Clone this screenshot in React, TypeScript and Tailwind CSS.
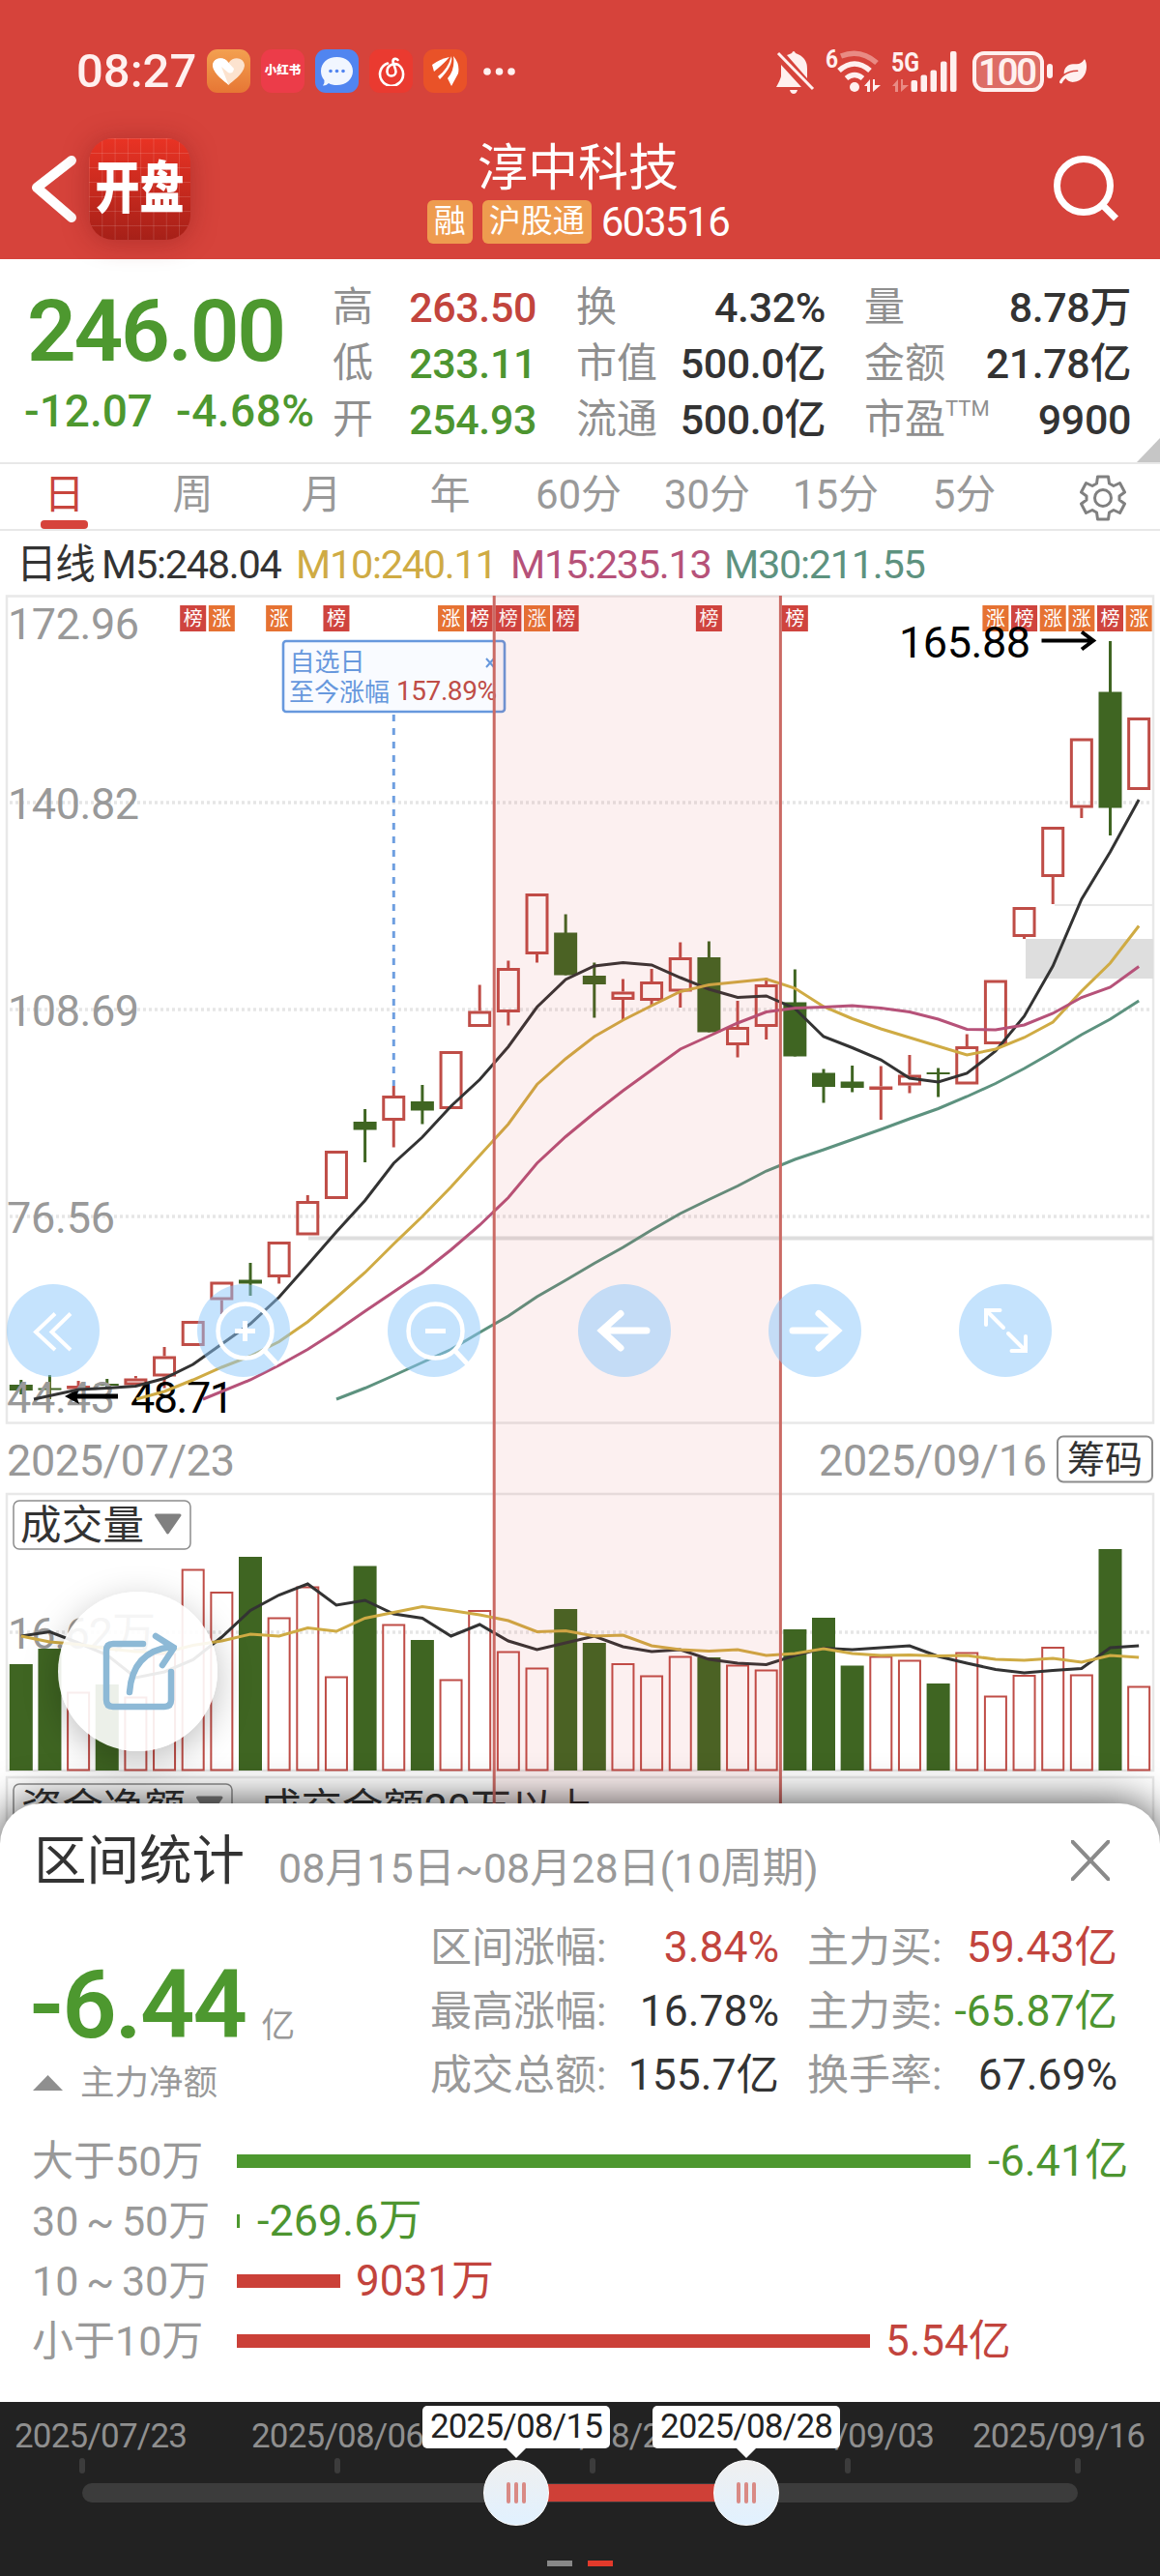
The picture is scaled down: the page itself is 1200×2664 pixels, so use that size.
import { FaLeaf } from "react-icons/fa";

const RED = "#bf4d47";
const GREEN = "#3f6522";

// [up, high, top, bottom, low, volumeTop]
const candles: [number, number, number, number, number, number][] = [
  [0, 1427, 1432, 1438, 1442, 1721],
  [0, 1422, 1435.5, 1437.5, 1447, 1705],
  [1, 1428, 1433, 1435, 1438, 1750],
  [0, 1426, 1431, 1433, 1437, 1742],
  [1, 1423, 1425.5, 1432.5, 1434, 1755],
  [1, 1393, 1402.5, 1423.5, 1435.5, 1710],
  [1, 1366, 1366, 1392, 1392, 1623],
  [1, 1325.5, 1325.5, 1344.5, 1359, 1646.5],
  [0, 1306, 1323.5, 1327.5, 1340, 1610],
  [1, 1284, 1284, 1321, 1327.5, 1673],
  [1, 1236, 1242, 1277.5, 1277.5, 1641],
  [1, 1190, 1190, 1240, 1240, 1734],
  [0, 1147, 1160, 1168.5, 1202, 1619.5],
  [1, 1123, 1133, 1159, 1186.5, 1680],
  [0, 1122, 1139, 1148.5, 1162.5, 1696],
  [1, 1087, 1087, 1147, 1147, 1737],
  [1, 1018.5, 1045.5, 1062, 1062, 1665.5],
  [1, 993.5, 1001, 1047, 1060.5, 1708],
  [1, 924, 924, 987, 995.5, 1725],
  [0, 945.5, 964.5, 1008.5, 1008.5, 1664],
  [0, 995.5, 1009, 1018, 1052.5, 1699],
  [1, 1012.5, 1025.5, 1034, 1055, 1720.5],
  [1, 1002, 1015, 1035, 1040, 1733],
  [1, 974.5, 990, 1025.5, 1042, 1713],
  [0, 973.5, 990, 1067.5, 1067.5, 1714],
  [1, 1035, 1062, 1081, 1093.5, 1722],
  [1, 1011.5, 1018, 1062, 1075, 1727],
  [0, 1002.5, 1036.5, 1092.5, 1092.5, 1685],
  [0, 1105.5, 1109.5, 1124, 1140.5, 1673],
  [0, 1102, 1118.5, 1125, 1129.5, 1722.5],
  [1, 1102.5, 1123.5, 1125, 1158, 1713],
  [1, 1091, 1111.5, 1122.5, 1130.5, 1717],
  [0, 1104.5, 1109, 1111, 1134.5, 1741],
  [1, 1069.5, 1082, 1121.5, 1121.5, 1709],
  [1, 1013.5, 1013.5, 1080, 1080, 1754],
  [1, 938, 938, 969, 971, 1732.5],
  [1, 855, 855, 907, 935, 1703.5],
  [1, 763.5, 763.5, 835.5, 846, 1732],
  [0, 663, 715.5, 835.5, 864, 1602],
  [1, 742, 742, 817, 817, 1744],
];

const cx = (i: number) => 21.8 + 29.65 * i;

// moving averages: x of the first visible point, index of the next one, y values
const priceLines = [
  {
    color: "#333333",
    x0: 35,
    from: 2,
    ys: [1437, 1435.5, 1433.5, 1425.5, 1411, 1390, 1369, 1341.5, 1308, 1274, 1241.5, 1203, 1176, 1144, 1116.5, 1082.5, 1041.5, 1013, 999, 995.5, 998, 1011, 1023, 1031.5, 1030, 1043, 1072, 1083.5, 1096, 1115, 1119, 1110, 1087, 1051, 999, 930, 881, 827],
  },
  {
    color: "#cfab44",
    x0: 141,
    from: 5,
    ys: [1439, 1427, 1414, 1402.5, 1387.5, 1367, 1342, 1316, 1286.5, 1258, 1227.5, 1195, 1162.5, 1121.5, 1095, 1072, 1055, 1040, 1025.5, 1018.5, 1015.5, 1012.5, 1022, 1041, 1053.5, 1064, 1073, 1082, 1091, 1085, 1073, 1057, 1025, 996, 957.5],
  },
  {
    color: "#b65279",
    x0: 210,
    from: 8,
    ys: [1427, 1412, 1395.5, 1376.5, 1356, 1336, 1316, 1292.5, 1267, 1238.5, 1203, 1175.5, 1151, 1128, 1106.5, 1085, 1071.5, 1058, 1046.5, 1042.5, 1041.5, 1040, 1042.5, 1046.5, 1054, 1064.5, 1065, 1060, 1048, 1031.5, 1021, 999.5],
  },
  {
    color: "#5d927f",
    x0: 348,
    from: 12,
    ys: [1435.5, 1422.5, 1409, 1395.5, 1378, 1361, 1341, 1324, 1306.5, 1290, 1272, 1255, 1240.5, 1226.5, 1211, 1199, 1189, 1178.5, 1168, 1157, 1146.5, 1134, 1120.5, 1105, 1088, 1070, 1054, 1035],
  },
];

const volumeLines = [
  {
    color: "#333333",
    ys: [1692, 1687.5, 1699, 1711.5, 1735, 1729, 1716.5, 1693, 1665.5, 1649.5, 1638, 1660, 1655, 1669, 1673.5, 1692, 1680, 1697, 1706, 1699, 1692, 1703, 1708, 1706, 1716, 1720, 1721.5, 1712, 1704.5, 1706, 1704, 1702, 1713, 1720, 1726.5, 1730, 1727.5, 1725.5, 1704, 1702],
  },
  {
    color: "#cfab44",
    ys: [1692, 1698, 1700.5, 1705, 1708, 1709, 1701.5, 1697, 1690, 1692, 1683.5, 1687, 1673.5, 1667.5, 1661.5, 1665.5, 1670, 1676, 1687.5, 1686.5, 1692, 1691, 1702, 1706, 1707.5, 1706, 1712, 1710, 1705, 1710, 1712, 1711.5, 1712.5, 1712, 1716, 1717, 1715, 1719, 1712, 1714],
  },
];

const flags: [number, string][] = [
  [6, "榜"],
  [7, "涨"],
  [9, "涨"],
  [11, "榜"],
  [15, "涨"],
  [16, "榜"],
  [17, "榜"],
  [18, "涨"],
  [19, "榜"],
  [24, "榜"],
  [27, "榜"],
  [34, "涨"],
  [35, "榜"],
  [36, "涨"],
  [37, "涨"],
  [38, "榜"],
  [39, "涨"],
];

const tabs = ["日", "周", "月", "年", "60分", "30分", "15分", "5分"];

const legend = [
  { label: "日线", className: "w-[88px] text-[#333]" },
  { label: "M5:248.04", className: "w-[201px] text-[#333]" },
  { label: "M10:240.11", className: "w-[222px] text-[#cfab44]" },
  { label: "M15:235.13", className: "w-[221px] text-[#b65279]" },
  { label: "M30:211.55", className: "text-[#5d927f]" },
];

const quoteColumns = [
  {
    className: "w-[211px]",
    rows: [
      { label: "高", value: "263.50", color: "text-[#c2443d]" },
      { label: "低", value: "233.11", color: "text-[#4d9530]" },
      { label: "开", value: "254.93", color: "text-[#4d9530]" },
    ],
  },
  {
    className: "ml-[41px] w-[258px]",
    rows: [
      { label: "换", value: "4.32%", color: "text-[#333]" },
      { label: "市值", value: "500.0亿", color: "text-[#333]" },
      { label: "流通", value: "500.0亿", color: "text-[#333]" },
    ],
  },
  {
    className: "ml-[40px] w-[276px]",
    rows: [
      { label: "量", value: "8.78万", color: "text-[#333]" },
      { label: "金额", value: "21.78亿", color: "text-[#333]" },
      { label: "市盈", sup: "TTM", value: "9900", color: "text-[#333]" },
    ],
  },
];

const statColumns = [
  {
    className: "w-[361px]",
    rows: [
      { label: "区间涨幅:", value: "3.84%", color: "text-[#c2443d]" },
      { label: "最高涨幅:", value: "16.78%", color: "text-[#333]" },
      { label: "成交总额:", value: "155.7亿", color: "text-[#333]" },
    ],
  },
  {
    className: "ml-[29px] w-[321px]",
    rows: [
      { label: "主力买:", value: "59.43亿", color: "text-[#c2443d]" },
      { label: "主力卖:", value: "-65.87亿", color: "text-[#4d9530]" },
      { label: "换手率:", value: "67.69%", color: "text-[#333]" },
    ],
  },
];

const flows = [
  { label: "大于50万", width: 759, value: "-6.41亿", up: false },
  { label: "30 ~ 50万", width: 3, value: "-269.6万", up: false },
  { label: "10 ~ 30万", width: 107, value: "9031万", up: true },
  { label: "小于10万", width: 655, value: "5.54亿", up: true },
];

const sliderDates = [
  { label: "2025/07/23", className: "ml-[15px]" },
  { label: "2025/08/06", className: "ml-[67px]" },
  { label: "2025/08/20", className: "ml-[86px]" },
  { label: "2025/09/03", className: "ml-[86px]" },
  { label: "2025/09/16", className: "ml-[40px]" },
];

const StatusBar = () => (
  <div className="flex h-[45px] items-center pl-[79px] text-[#fff0ef]">
    <span className="w-[135px] text-[49px] leading-[45px] font-medium">08:27</span>
    <div className="flex gap-[11px]">
      <div className="flex size-[45px] items-center justify-center rounded-[11px] bg-linear-to-b from-[#f3a050] to-[#e67634]">
        <svg width="35" height="30" viewBox="0 0 35 30">
          <path d="M17.5 29 C14 25 2 18 1 9 C1 1 12 -2 17.5 6 C23 -2 34 1 34 9 C33 18 21 25 17.5 29Z" fill="#fce3cf" />
          <path d="M17.5 29 C14 25 2 18 1 9 C1 1 12 -2 17.5 6 L23 12 Q22 18 17 16 L10 10" fill="#fff" />
        </svg>
      </div>
      <div className="flex size-[45px] items-center justify-center rounded-[11px] bg-[#ec3c49] text-[12.5px] leading-none font-black whitespace-nowrap text-white">
        小红书
      </div>
      <div className="flex size-[45px] items-center justify-center rounded-[11px] bg-[#5185f0]">
        <svg width="35" height="32" viewBox="0 0 35 32">
          <path d="M17.5 1 C27 1 34 7 34 15.500 C34 24 27 30 17.500 30 C14 30 11 29.500 9 28 Q6 31 3 30.500 Q5 28 4.500 25 C2 22 1 19 1 15.500 C1 7 8 1 17.500 1Z" fill="#f1f6ff" />
          <g fill="#5185f0">
            <circle cx="11" cy="15.500" r="1.800" />
            <circle cx="17.500" cy="15.500" r="1.800" />
            <circle cx="24" cy="15.500" r="1.800" />
          </g>
        </svg>
      </div>
      <div className="flex size-[45px] items-center justify-center rounded-[11px] bg-[#ea3a30]">
        <svg width="28" height="30" viewBox="0 0 28 30" fill="none" stroke="#fff" strokeWidth="2.600" strokeLinecap="round">
          <path d="M10 6.500 A12 12 0 1 0 21 8 C17 6 9 8 9.500 15.500 C10 21 18.500 21 18.500 15 C18.500 12 15.500 7 15.500 4.500 C15.500 1.500 19 1 20.500 3" />
        </svg>
      </div>
      <div className="flex size-[45px] items-center justify-center rounded-[11px] bg-[#e95228]">
        <svg width="29" height="31" viewBox="0 0 29 31" fill="#fff">
          <path d="M1 9 Q9 3 19 1 Q13 8 3 16Z" />
          <path d="M7 21 Q17 14 21 0 Q23 10 9 24Z" />
          <path d="M23 0 Q30 8 28 18 L21 31 L17 23 Q25 14 23 0Z" />
        </svg>
      </div>
    </div>
    <svg className="ml-[14px]" width="40" height="10" fill="#fff0ef">
      <circle cx="7" cy="5" r="3.800" />
      <circle cx="19.500" cy="5" r="3.800" />
      <circle cx="32" cy="5" r="3.800" />
    </svg>
    <svg className="ml-[264px]" width="290" height="64" viewBox="802 41 290 64" fill="#fff0ef">
      {/* muted bell */}
      <path d="M815 56 Q818 55 820 54 Q822 50 824 54 Q836 58 836 70 L836 80Z" />
      <path d="M809 66 L830 89 H804 Q808 82 809 78Z" />
      <path d="M818 92 H826 Q825 96 822 96 Q819 96 818 92Z" />
      <path d="M806 54 L842 91" stroke="#fff0ef" strokeWidth="3" />
      {/* wifi 6 */}
      <text x="855" y="69" fontSize="25" fontWeight="700" textLength="13" lengthAdjust="spacingAndGlyphs">6</text>
      <g fill="none" strokeWidth="5.500">
        <path d="M871 57 Q891 49 908 64" stroke="#e98b84" />
        <path d="M869 72 Q885 58 901 72" stroke="#fff0ef" />
        <path d="M876.500 80 Q885 73 893.500 80" stroke="#fff0ef" />
      </g>
      <circle cx="885" cy="89" r="5" />
      <path d="M895 88 L901 81 V94 H898 V88Z M904 81 H906 V87 H912 L904 94Z" />
      {/* cellular */}
      <text x="923" y="73" fontSize="28" fontWeight="700" textLength="29" lengthAdjust="spacingAndGlyphs">5G</text>
      <path d="M924 88 L930 81 V94 H927 V88Z M933 81 H935 V87 H941 L933 94Z" fill="#e98b84" />
      <rect x="943.500" y="82" width="6.500" height="12" rx="2" />
      <rect x="953.500" y="76.500" width="6.500" height="17.500" rx="2" />
      <rect x="963.500" y="71.500" width="6.500" height="22.500" rx="2" />
      <rect x="974" y="62.500" width="6.500" height="31.500" rx="2" />
      <rect x="984" y="52" width="6.500" height="42" rx="2" />
      {/* battery */}
      <rect x="1009" y="54" width="70" height="38" rx="10" fill="#dd6c65" stroke="#fff0ef" strokeWidth="4" />
      <text x="1013" y="87" fontSize="38" fontWeight="600" textLength="61">100</text>
      <rect x="1084" y="65" width="6" height="15" rx="3" />
    </svg>
    <FaLeaf className="ml-[5px] size-[28px]" />
  </div>
);

const Header = () => (
  <header className="h-[268px] bg-[#d6433b] pt-[51px] text-white">
    <StatusBar />
    <div className="mt-[13px] flex h-[172px] items-center justify-between pr-[40px] pl-[30px]">
      <div className="flex w-[330px] items-center">
        <svg width="50" height="80" fill="none" stroke="#fff" strokeWidth="10" strokeLinecap="round" strokeLinejoin="round">
          <path d="M44 11 L8 39 L44 70" />
        </svg>
        <div className="ml-[12px] flex size-[105px] items-center justify-center rounded-[25px] bg-[linear-gradient(#ffffff22_1px,transparent_1px),linear-gradient(90deg,#ffffff22_1px,transparent_1px),linear-gradient(#e93324,#a62018)] bg-[size:13.3px_15px,13.3px_15px,100%_100%] shadow-[0_2px_28px_rgba(120,20,20,0.4)]">
          <span className="scale-y-[1.27] text-[46px] leading-none font-black">开盘</span>
        </div>
      </div>
      <div className="flex flex-col items-center pl-[6px]">
        <div className="pt-[6px] text-[52px] leading-[60px]">淳中科技</div>
        <div className="mt-[2px] flex items-center">
          <span className="flex h-[45px] w-[47px] items-center justify-center rounded-[6px] bg-[#ee9c4f] text-[33px]">融</span>
          <span className="ml-[10px] flex h-[45px] w-[113px] items-center justify-center rounded-[6px] bg-[#ee9c4f] text-[33px]">沪股通</span>
          <span className="ml-[10px] text-[42px] leading-[45px] tracking-[-1.5px]">603516</span>
        </div>
      </div>
      <div className="flex w-[330px] justify-end">
        <svg width="70" height="72" fill="none" stroke="#fff" strokeWidth="7">
          <circle cx="31" cy="33" r="27.500" />
          <path d="M50.500 53 L64.500 67" />
        </svg>
      </div>
    </div>
  </header>
);

const QuotePanel = () => (
  <section className="relative flex h-[212px] border-b-2 border-[#e8e8e8] pt-[21px]">
    <div className="w-[344px] text-[#4d982f]">
      <div className="mt-[11px] ml-[28px] text-[89px] leading-[86px] font-semibold tracking-[-2.300px]">246.00</div>
      <div className="mt-[16px] flex text-[46px] leading-[46px] font-medium">
        <span className="ml-[25px] w-[157px]">-12.07</span>
        <span className="tracking-[0.5px]">-4.68%</span>
      </div>
    </div>
    {quoteColumns.map((column, index) => (
      <div key={index} className={column.className}>
        {column.rows.map((row) => (
          <div key={row.label} className="flex h-[58px] items-center justify-between leading-[58px]">
            <span className="flex text-[42px] text-[#8f8f8f]">
              {row.label}
              {row.sup && <span className="text-[22px] leading-[36px]">{row.sup}</span>}
            </span>
            <span className={`text-[43px] font-medium tracking-[-0.4px] ${row.color}`}>{row.value}</span>
          </div>
        ))}
      </div>
    ))}
    <svg className="absolute right-0 bottom-0" width="24" height="25">
      <path d="M0 25 L24 0 V25Z" fill="#c6c6c6" />
    </svg>
  </section>
);

const PeriodTabs = () => (
  <nav className="flex h-[68.500px] items-start border-b-2 border-[#e8e8e8] text-[42px] text-[#999]">
    {tabs.map((tab, index) => (
      <div key={tab} className="flex w-[133px] flex-col items-center pt-[6px] leading-[52px]">
        <span className={index === 0 ? "text-[#c8453d]" : ""}>{tab}</span>
        {index === 0 && <span className="h-[9px] w-[49px] rounded-[4px] bg-[#d6433b]" />}
      </div>
    ))}
    <div className="mt-[11px] ml-[53px]">
      <svg width="48" height="48" viewBox="-24 -24 48 48" fill="none" stroke="#808080" strokeWidth="3" strokeLinejoin="round">
        <circle r="8.500" />
        <path d="M-5.500 -22 H5.500 L6.500 -15 L11 -12.500 L17.500 -15.500 L22.500 -6 L17 -2 V2 L22.500 6 L17.500 15.500 L11 12.500 L6.500 15 L5.500 22 H-5.500 L-6.500 15 L-11 12.500 L-17.500 15.500 L-22.500 6 L-17 2 V-2 L-22.500 -6 L-17.500 -15.500 L-11 -12.500 L-6.500 -15Z" />
      </svg>
    </div>
  </nav>
);

const GridLine = ({ y }: { y: number }) => (
  <path d={`M10 ${y} H1190`} stroke="#e6e6e6" strokeWidth="3.500" strokeDasharray="3 3" />
);

const KLineChart = () => (
  <svg className="block" width="1200" height="1292" viewBox="0 614 1200 1292">
    <g fill="none" stroke="#e8e8e8" strokeWidth="2.500">
      <rect x="7" y="616.500" width="1186" height="855" />
      <rect x="7" y="1545" width="1186" height="286" />
      <rect x="7" y="1838" width="1186" height="100" />
    </g>
    <GridLine y={830} />
    <GridLine y={1044} />
    <GridLine y={1258} />
    <GridLine y={1688} />

    {/* gaps */}
    <rect x="1061" y="971" width="132" height="41" fill="#dedede" />
    <rect x="1091" y="935" width="102" height="2" fill="#e8e8e8" />
    <rect x="319" y="1278.500" width="874" height="4" fill="#dedede" />

    {/* candles and volume */}
    {candles.map(([up, high, top, bottom, low, vol], i) => {
      const x = cx(i);
      return up ? (
        <g key={i} stroke={RED} fill="none">
          <path d={`M${x} ${high} V${top} M${x} ${bottom} V${low}`} strokeWidth="3" />
          <rect x={x - 10.5} y={top + 1.5} width="21" height={Math.max(bottom - top - 3, 0.5)} strokeWidth="3" />
          <rect x={x - 11} y={vol + 0.5} width="22" height={1830 - vol} strokeWidth="2" />
        </g>
      ) : (
        <g key={i} fill={GREEN}>
          <rect x={x - 1.5} y={high} width="3" height={low - high} />
          <rect x={x - 12} y={top} width="24" height={bottom - top} />
          <rect x={x - 12} y={vol} width="24" height={1831 - vol} />
        </g>
      );
    })}

    {/* axis labels */}
    <g fill="#999" fontSize="45">
      <text x="8" y="661" textLength="136">172.96</text>
      <text x="8" y="847" textLength="136">140.82</text>
      <text x="8" y="1061" textLength="136">108.69</text>
      <text x="7" y="1275" textLength="112">76.56</text>
      <text x="7" y="1461" textLength="112">44.43</text>
      <text x="7" y="1525.500" textLength="236">2025/07/23</text>
      <text x="847" y="1525.500" textLength="236">2025/09/16</text>
      <text x="8" y="1704.500" textLength="153">16.62万</text>
    </g>

    {flags.map(([i, label]) => (
      <g key={i}>
        <rect x={cx(i) - 13.5} y="626" width="27" height="27" fill={label === "榜" ? "#cf443e" : "#e67232"} />
        <text x={cx(i)} y="647" fontSize="20" fill="#fff" textAnchor="middle">
          {label}
        </text>
      </g>
    ))}

    {/* low and high markers */}
    <g fontSize="45" fill="#000">
      <text x="135" y="1461" textLength="107">48.71</text>
      <text x="930" y="679.500" textLength="136">165.88</text>
    </g>
    <path d="M1077.500 662.500 H1131 M1119 653.500 L1131 662.500 L1119 671.500" fill="none" stroke="#000" strokeWidth="4" />
    <path d="M122 1444 H76" fill="none" stroke="#000" strokeWidth="5" />
    <path d="M67 1444 L82 1436 L79 1444 L82 1452Z" fill="#000" />

    {priceLines.map((line) => (
      <polyline
        key={line.color}
        points={`${line.x0},1447 ${line.ys.map((y, k) => `${cx(line.from + k)},${y}`).join(" ")}`}
        fill="none"
        stroke={line.color}
        strokeWidth="3"
      />
    ))}
    {volumeLines.map((line) => (
      <polyline
        key={line.color}
        points={line.ys.map((y, k) => `${cx(k)},${y}`).join(" ")}
        fill="none"
        stroke={line.color}
        strokeWidth="3"
      />
    ))}

    {/* watchlist date callout */}
    <path d="M407.300 739 V1123" stroke="#6f9fe0" strokeWidth="3" strokeDasharray="7 7" />
    <rect x="293" y="663" width="229" height="73" rx="3" fill="#f9fbff" stroke="#6798dd" strokeWidth="2.600" />
    <text x="299.500" y="694" fontSize="26" fill="#6798dd">自选日</text>
    <text x="299" y="725" fontSize="26" fill="#6798dd">至今涨幅</text>
    <text x="410" y="724" fontSize="28" fill="#bf4d47" textLength="104">157.89%</text>
    <path d="M503 681 L511 690 M511 681 L503 690" stroke="#6798dd" strokeWidth="2" />

    {/* sub chart selectors */}
    <g fill="#fff" stroke="#8c8c8c" strokeWidth="1.500">
      <rect x="1094" y="1485.500" width="98" height="47" rx="6" strokeWidth="2" />
      <rect x="14" y="1552" width="183" height="50" rx="6" />
      <rect x="14" y="1845" width="226" height="50" rx="6" />
    </g>
    <g fill="#333" fontSize="42.500">
      <text x="1104" y="1523" fontSize="39">筹码</text>
      <text x="21" y="1592" textLength="128">成交量</text>
      <text x="22" y="1885">资金净额</text>
      <text x="269" y="1885" textLength="345">成交金额20万以上</text>
    </g>
    <g fill="#808080" stroke="#808080" strokeWidth="3" strokeLinejoin="round">
      <path d="M161.500 1567 H186 L173.500 1585Z" />
      <path d="M204.500 1859 H229 L216.500 1877Z" />
    </g>

    {/* selected range */}
    <rect x="511" y="616" width="296.500" height="1290" fill="#d6433b" fillOpacity="0.080" />
    <path d="M511.200 616 V1906 M807.400 616 V1906" stroke="#cb6a64" strokeWidth="3" />
  </svg>
);

const toolIcons = [
  "M57 58.500 L37 77.500 L57 96 M73 58.500 L53.500 77.500 L73 96",
  "M272.500 95.500 L287 111 M243 76.500 H264 M253.500 66 V87",
  "M469.500 95.500 L484 111 M440 76.500 H461",
  "M669 76 H624 M642 58.500 L622.500 76 L642 94",
  "M820 76 H865 M847 58.500 L866.500 76 L847 94",
  "M1034.500 55 H1020 V70 M1020 55 L1038 73 M1046.500 97 H1061 V82 M1061 97 L1043 79",
];

const ChartTools = () => (
  <svg className="absolute top-[686px] left-0" width="1200" height="150" viewBox="0 0 1200 150">
    {toolIcons.map((d, i) => (
      <g key={i} fill="none" stroke="#fff" strokeLinecap={i > 2 ? "round" : "butt"}>
        <circle cx={55 + 197 * i} cy="76" r="48" fill="#8bc7fb" fillOpacity="0.500" stroke="none" />
        {(i === 1 || i === 2) && <circle cx={56.500 + 197 * i} cy="76.500" r="28" strokeWidth="4.500" />}
        <path d={d} strokeWidth={i === 3 || i === 4 ? 7 : i === 0 || i === 5 ? 4 : 5} />
      </g>
    ))}
  </svg>
);

const ShareButton = () => (
  <div className="absolute top-[1032px] left-[60px] flex size-[165px] items-center justify-center rounded-full bg-white/90 shadow-[0_10px_36px_rgba(0,0,0,0.25)]">
    <svg width="80" height="84" viewBox="102 1683 80 84" fill="none" stroke="#8db9d6" strokeWidth="6.500" strokeLinecap="round">
      <path d="M147 1696 H116 Q109 1696 109 1703 V1754 Q109 1761 116 1761 H169 Q176 1761 176 1754 V1725" />
      <path d="M133 1746 Q136 1704 176 1699 M160 1688 L179 1700 L167 1718" />
    </svg>
  </div>
);

const RangeSheet = () => (
  <section className="relative -mt-[41px] h-[619px] rounded-t-[42px] bg-white pt-[28px] text-[43px] shadow-[0_0_44px_rgba(0,0,0,0.75)]">
    <div className="flex h-[62px] items-center pr-[52px] pl-[35px]">
      <span className="pt-[2px] text-[54.500px] text-[#333]">区间统计</span>
      <span className="mt-[17px] ml-[35px] flex-1 text-[43px] text-[#999]">08月15日~08月28日(10周期)</span>
      <svg width="40" height="42" stroke="#8a8a8a" strokeWidth="4">
        <path d="M0 0 L40 42 M40 0 L0 42" />
      </svg>
    </div>
    <div className="mt-[26px] flex h-[198px]">
      <div className="w-[445px]">
        <div className="mt-[42px] flex h-[100px] items-baseline pl-[30px] leading-[100px]">
          <span className="text-[99px] font-semibold tracking-[-2px] text-[#4d982f]">-6.44</span>
          <span className="ml-[16px] text-[35px] text-[#999]">亿</span>
        </div>
        <div className="mt-[13px] flex items-center pl-[34px] text-[35.500px] leading-[36px] text-[#999]">
          <svg width="31" height="16">
            <path d="M0 16 L15.500 0 L31 16Z" fill="#8f8f8f" />
          </svg>
          <span className="ml-[18px]">主力净额</span>
        </div>
      </div>
      {statColumns.map((column, index) => (
        <div key={index} className={column.className}>
          {column.rows.map((row) => (
            <div key={row.label} className="flex h-[66px] items-center justify-between leading-[66px] whitespace-nowrap">
              <span className="text-[#999]">{row.label}</span>
              <span className={`text-[44.500px] ${row.color}`}>{row.value}</span>
            </div>
          ))}
        </div>
      ))}
    </div>
    <div className="mt-[25px]">
      {flows.map((flow) => (
        <div key={flow.label} className="flex h-[62px] items-center pl-[33px] leading-[62px]">
          <span className="w-[212px] text-[#999] [word-spacing:-3px]">{flow.label}</span>
          <span
            className={flow.up ? "h-[14px] bg-[#cb4038]" : "h-[14px] bg-[#4d982f]"}
            style={{ width: flow.width }}
          />
          <span className={flow.up ? "ml-[16px] text-[44px] text-[#c2443d]" : "ml-[18px] text-[45px] text-[#4d9530]"}>
            {flow.value}
          </span>
        </div>
      ))}
    </div>
  </section>
);

const Handle = ({ date, className }: { date: string; className: string }) => (
  <div className={`absolute top-[4px] flex w-[194px] flex-col items-center ${className}`}>
    <span className="flex h-[44px] w-full items-center justify-center rounded-[5px] bg-white text-[35px] tracking-[-0.8px] text-[#222]">
      {date}
    </span>
    <svg width="20" height="10">
      <path d="M0 0 H20 L10 10Z" fill="#fff" />
    </svg>
    <span className="mt-[2px] flex size-[68px] items-center justify-center gap-[4px] rounded-full border border-white bg-linear-to-b from-[#efefef] to-[#e1f1ff]">
      <span className="h-[22px] w-[4px] rounded-full bg-[#d98a85]" />
      <span className="h-[22px] w-[4px] rounded-full bg-[#d98a85]" />
      <span className="h-[22px] w-[4px] rounded-full bg-[#d98a85]" />
    </span>
  </div>
);

const RangeSlider = () => (
  <section className="relative h-[180px] bg-[#222] pt-[14px]">
    <div className="flex text-[35px] leading-[44px] tracking-[-0.8px] text-[#8f8f8f]">
      {sliderDates.map((date) => (
        <span key={date.label} className={`w-[178px] text-center ${date.className}`}>
          {date.label}
        </span>
      ))}
    </div>
    <div className="flex pl-[82px]">
      <span className="h-[16px] w-[6px] rounded-full bg-[#3c3c3c]" />
      <span className="ml-[258px] h-[16px] w-[6px] rounded-full bg-[#3c3c3c]" />
      <span className="ml-[258px] h-[16px] w-[6px] rounded-full bg-[#3c3c3c]" />
      <span className="ml-[258px] h-[16px] w-[6px] rounded-full bg-[#3c3c3c]" />
      <span className="ml-[232px] h-[16px] w-[6px] rounded-full bg-[#3c3c3c]" />
    </div>
    <div className="mt-[10px] ml-[85px] flex h-[20px] w-[1030px] items-center rounded-full bg-[#3c3c3c]">
      <div className="ml-[449px] h-[18px] w-[237px] bg-[#cf4037]" />
    </div>
    <div className="mt-[60px] flex justify-center gap-[16px]">
      <span className="h-[6px] w-[26px] bg-[#888]" />
      <span className="h-[6px] w-[26px] bg-[#e23a2b]" />
    </div>
    <Handle date="2025/08/15" className="left-[437px]" />
    <Handle date="2025/08/28" className="left-[675px]" />
  </section>
);

const App = () => {
  return (
    <div className="w-[1200px] overflow-hidden bg-white font-['Roboto','Noto_Sans_CJK_SC',sans-serif]">
      <Header />
      <QuotePanel />
      <PeriodTabs />
      <div className="flex h-[65.500px] items-center pt-[6px] pl-[17px] text-[41.500px] tracking-[-1.3px] whitespace-nowrap">
        {legend.map((item) => (
          <span key={item.label} className={item.className}>
            {item.label}
          </span>
        ))}
      </div>
      <div className="relative">
        <KLineChart />
        <ChartTools />
        <ShareButton />
      </div>
      <RangeSheet />
      <RangeSlider />
    </div>
  );
};

export default App;
